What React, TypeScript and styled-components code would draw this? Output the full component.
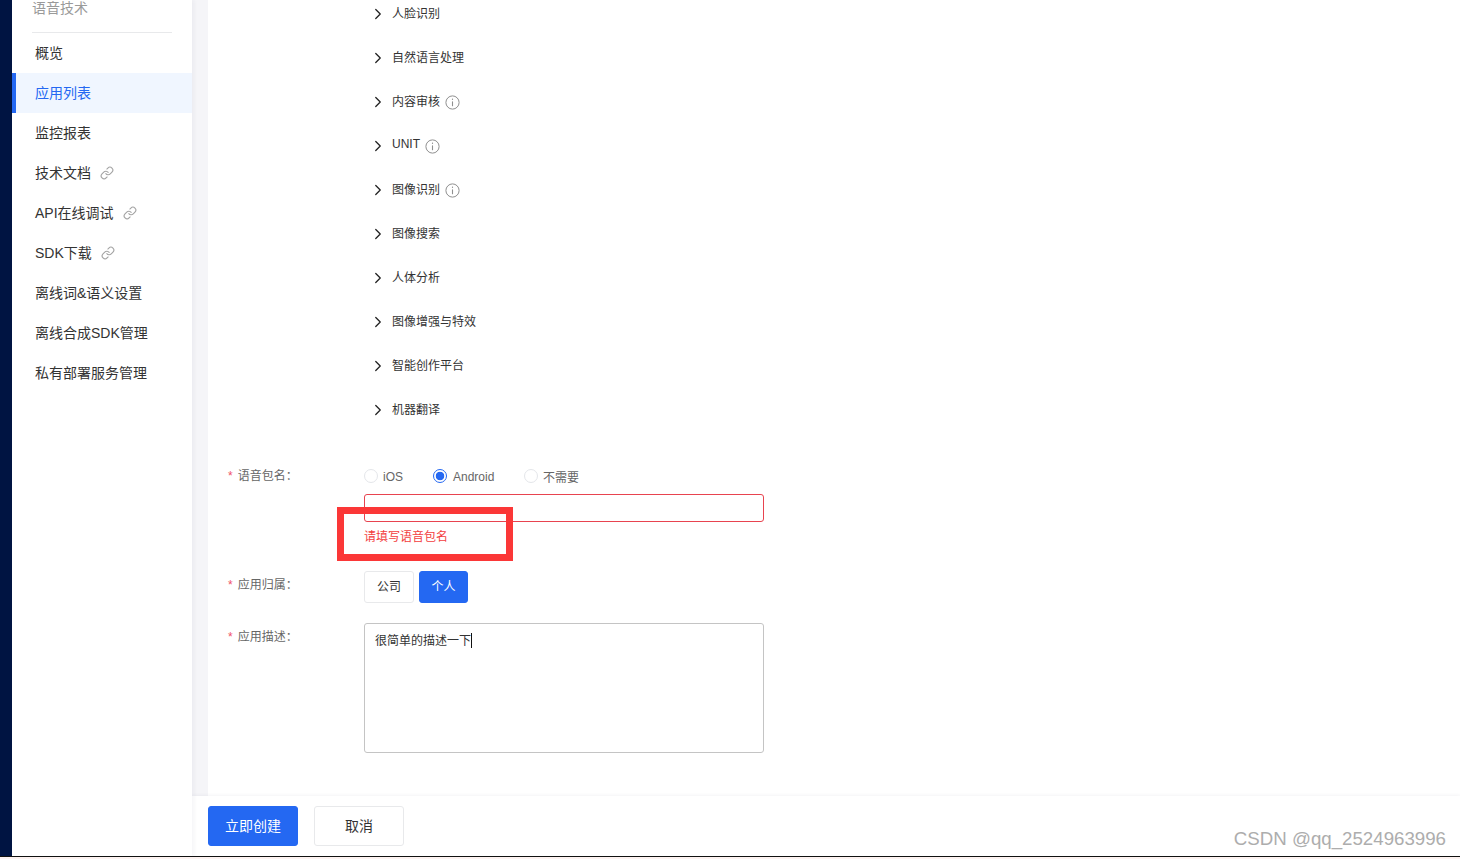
import React from "react";
import styled, { createGlobalStyle } from "styled-components";
import { ChevronRight, Link as LinkIcon } from "lucide-react";

const Global = createGlobalStyle`
  html, body { margin: 0; padding: 0; background: #fff; overflow: hidden; }
  * { box-sizing: border-box; }
  body { font-family: "Liberation Sans", "Noto Sans CJK SC", sans-serif; }
`;

const Page = styled.div`
  width: 1460px;
  height: 859px;
  display: flex;
  flex-direction: column;
  position: relative;
  overflow: hidden;
  background: #fdf3f1;
`;
const Frame = styled.div`
  height: 857px;
  display: flex;
  border-bottom: 1px solid #111;
  background: #fff;
  overflow: hidden;
`;
const Rail = styled.div`
  width: 12px;
  flex: none;
  background: #001442;
`;
const Sidebar = styled.aside`
  width: 180px;
  flex: none;
  background: #fff;
  position: relative;
  z-index: 1;
  box-shadow: 2px 0 4px rgba(30, 40, 70, 0.05);
`;
const SideHeader = styled.div`
  margin: 0 20px;
  height: 33px;
  border-bottom: 1px solid #e8e9eb;
  font-size: 14px;
  line-height: 16px;
  color: #9a9a9a;
`;
const SideItem = styled.div<{ $active?: boolean }>`
  height: 40px;
  display: flex;
  align-items: center;
  gap: 9px;
  padding-left: ${(p) => (p.$active ? 19 : 23)}px;
  padding-bottom: 2px;
  font-size: 14px;
  color: ${(p) => (p.$active ? "#2468f2" : "#333")};
  background: ${(p) => (p.$active ? "#f0f6ff" : "transparent")};
  border-left: ${(p) => (p.$active ? "4px solid #2468f2" : "none")};
  svg { color: #a3a3a3; margin-top: 2px; }
`;
const Right = styled.div`
  flex: 1;
  display: flex;
  flex-direction: column;
  min-width: 0;
`;
const Body = styled.div`
  flex: 1;
  display: flex;
  min-height: 0;
  background: #f5f5f8;
  padding-left: 16px;
`;
const Main = styled.main`
  flex: 1;
  background: #fff;
  padding-left: 20px;
  overflow: hidden;
`;
const Tree = styled.ul`
  list-style: none;
  margin: -9px 0 0 136px;
  padding: 0;
`;
const TreeRow = styled.li`
  height: 44px;
  display: flex;
  align-items: center;
  padding-bottom: 2px;
  font-size: 12px;
  color: #333;
  svg.chev { margin: 3px 5px 0; color: #222; flex: none; }
  svg.info { margin: 5px 0 0 5px; color: #8f8f8f; flex: none; }
`;
const FormRow = styled.div<{ $top: number }>`
  display: grid;
  grid-template-columns: 136px 400px;
  margin-top: ${(p) => p.$top}px;
`;
const Label = styled.div<{ $h: number }>`
  font-size: 12px;
  line-height: ${(p) => p.$h}px;
  color: #666;
  &::before {
    content: "*";
    color: #f0516a;
    margin-right: 5px;
  }
`;
const Radios = styled.div`
  display: flex;
  align-items: center;
  height: 14px;
  font-size: 12px;
  color: #666;
`;
const RadioItem = styled.label<{ $w: number; $gap?: number }>`
  display: flex;
  align-items: center;
  gap: ${(p) => p.$gap ?? 5}px;
  width: ${(p) => p.$w}px;
`;
const RadioDot = styled.span<{ $on?: boolean }>`
  width: 14px;
  height: 14px;
  border-radius: 50%;
  flex: none;
  border: 1px solid ${(p) => (p.$on ? "#2468f2" : "#e4e6ea")};
  background: ${(p) => (p.$on ? "radial-gradient(circle, #2468f2 0 4px, #fff 4.6px)" : "#fff")};
`;
const OptionText = styled.span<{ $shift?: number }>`
  margin-top: ${(p) => p.$shift ?? 1}px;
`;
const NameInput = styled.div`
  width: 400px;
  height: 28px;
  margin-top: 11px;
  border: 1px solid #e8434f;
  border-radius: 3px;
`;
const ErrorText = styled.div`
  margin-top: 7px;
  font-size: 12px;
  line-height: 16px;
  color: #f33e3e;
`;
const Toggles = styled.div`
  display: flex;
  gap: 5px;
`;
const Toggle = styled.div<{ $on?: boolean; $w: number }>`
  width: ${(p) => p.$w}px;
  height: 32px;
  display: flex;
  align-items: center;
  justify-content: center;
  padding-bottom: 4px;
  font-size: 12px;
  border-radius: 3px;
  color: ${(p) => (p.$on ? "#fff" : "#333")};
  background: ${(p) => (p.$on ? "#2468f2" : "#fff")};
  border: 1px solid ${(p) => (p.$on ? "#2468f2" : "#e8e9eb")};
`;
const TextArea = styled.div`
  width: 400px;
  height: 130px;
  border: 1px solid #c4c4c4;
  border-radius: 3px;
  padding: 9px 10px;
  font-size: 12px;
  line-height: 17px;
  color: #333;
`;
const Caret = styled.span`
  display: inline-block;
  width: 1px;
  height: 15px;
  background: #111;
  vertical-align: -3px;
`;
const Footer = styled.footer`
  height: 60px;
  flex: none;
  display: flex;
  align-items: center;
  gap: 16px;
  padding: 0 0 0 16px;
  background: #fff;
  box-shadow: 0 -1px 3px rgba(30, 40, 70, 0.05);
  position: relative;
`;
const Button = styled.button<{ $primary?: boolean }>`
  width: 90px;
  height: 40px;
  padding: 0 0 2px;
  font: inherit;
  font-size: 14px;
  border-radius: 3px;
  color: ${(p) => (p.$primary ? "#fff" : "#333")};
  background: ${(p) => (p.$primary ? "#2468f2" : "#fff")};
  border: 1px solid ${(p) => (p.$primary ? "#2468f2" : "#e8e9eb")};
`;
const Highlight = styled.div`
  position: absolute;
  left: 337px;
  top: 507px;
  width: 176px;
  height: 54px;
  border: 7px solid #fb3737;
  pointer-events: none;
`;
const Watermark = styled.div`
  position: absolute;
  right: 14px;
  top: 828px;
  font-size: 18.7px;
  line-height: 22px;
  color: #adadad;
`;

const InfoGlyph = () => (
  <svg className="info" width="15" height="15" viewBox="0 0 15 15" fill="none" stroke="currentColor">
    <circle cx="7.5" cy="7.5" r="6.6" strokeWidth="1" />
    <path d="M7.5 6.4V11.2" strokeWidth="1.1" />
    <path d="M7.5 3.6V4.9" strokeWidth="1.1" />
  </svg>
);

const side: { name: string; link?: boolean; active?: boolean }[] = [
  { name: "概览" },
  { name: "应用列表", active: true },
  { name: "监控报表" },
  { name: "技术文档", link: true },
  { name: "API在线调试", link: true },
  { name: "SDK下载", link: true },
  { name: "离线词&语义设置" },
  { name: "离线合成SDK管理" },
  { name: "私有部署服务管理" },
];
const tree: { name: string; info?: boolean }[] = [
  { name: "人脸识别" },
  { name: "自然语言处理" },
  { name: "内容审核", info: true },
  { name: "UNIT", info: true },
  { name: "图像识别", info: true },
  { name: "图像搜索" },
  { name: "人体分析" },
  { name: "图像增强与特效" },
  { name: "智能创作平台" },
  { name: "机器翻译" },
];

export default function App() {
  return (
    <Page>
      <Global />
      <Frame>
        <Rail />
        <Sidebar>
          <SideHeader>语音技术</SideHeader>
          {side.map((s) => (
            <SideItem key={s.name} $active={s.active}>
              {s.name}
              {s.link && <LinkIcon size={14} strokeWidth={1.9} />}
            </SideItem>
          ))}
        </Sidebar>
        <Right>
          <Body>
            <Main>
              <Tree>
                {tree.map((t) => (
                  <TreeRow key={t.name}>
                    <ChevronRight className="chev" size={18} strokeWidth={1.7} />
                    {t.name}
                    {t.info && <InfoGlyph />}
                  </TreeRow>
                ))}
              </Tree>
              <FormRow $top={38}>
                <Label $h={14}>语音包名：</Label>
                <div>
                  <Radios>
                    <RadioItem $w={69}><RadioDot /><OptionText>iOS</OptionText></RadioItem>
                    <RadioItem $w={91} $gap={6}><RadioDot $on /><OptionText>Android</OptionText></RadioItem>
                    <RadioItem $w={70}><RadioDot /><OptionText $shift={0}>不需要</OptionText></RadioItem>
                  </Radios>
                  <NameInput />
                  <ErrorText>请填写语音包名</ErrorText>
                </div>
              </FormRow>
              <FormRow $top={26}>
                <Label $h={28}>应用归属：</Label>
                <Toggles>
                  <Toggle $w={50}>公司</Toggle>
                  <Toggle $w={49} $on>个人</Toggle>
                </Toggles>
              </FormRow>
              <FormRow $top={20}>
                <Label $h={28}>应用描述：</Label>
                <TextArea>很简单的描述一下<Caret /></TextArea>
              </FormRow>
            </Main>
          </Body>
          <Footer>
            <Button $primary>立即创建</Button>
            <Button>取消</Button>
          </Footer>
        </Right>
      </Frame>
      <Highlight />
      <Watermark>CSDN @qq_2524963996</Watermark>
    </Page>
  );
}
